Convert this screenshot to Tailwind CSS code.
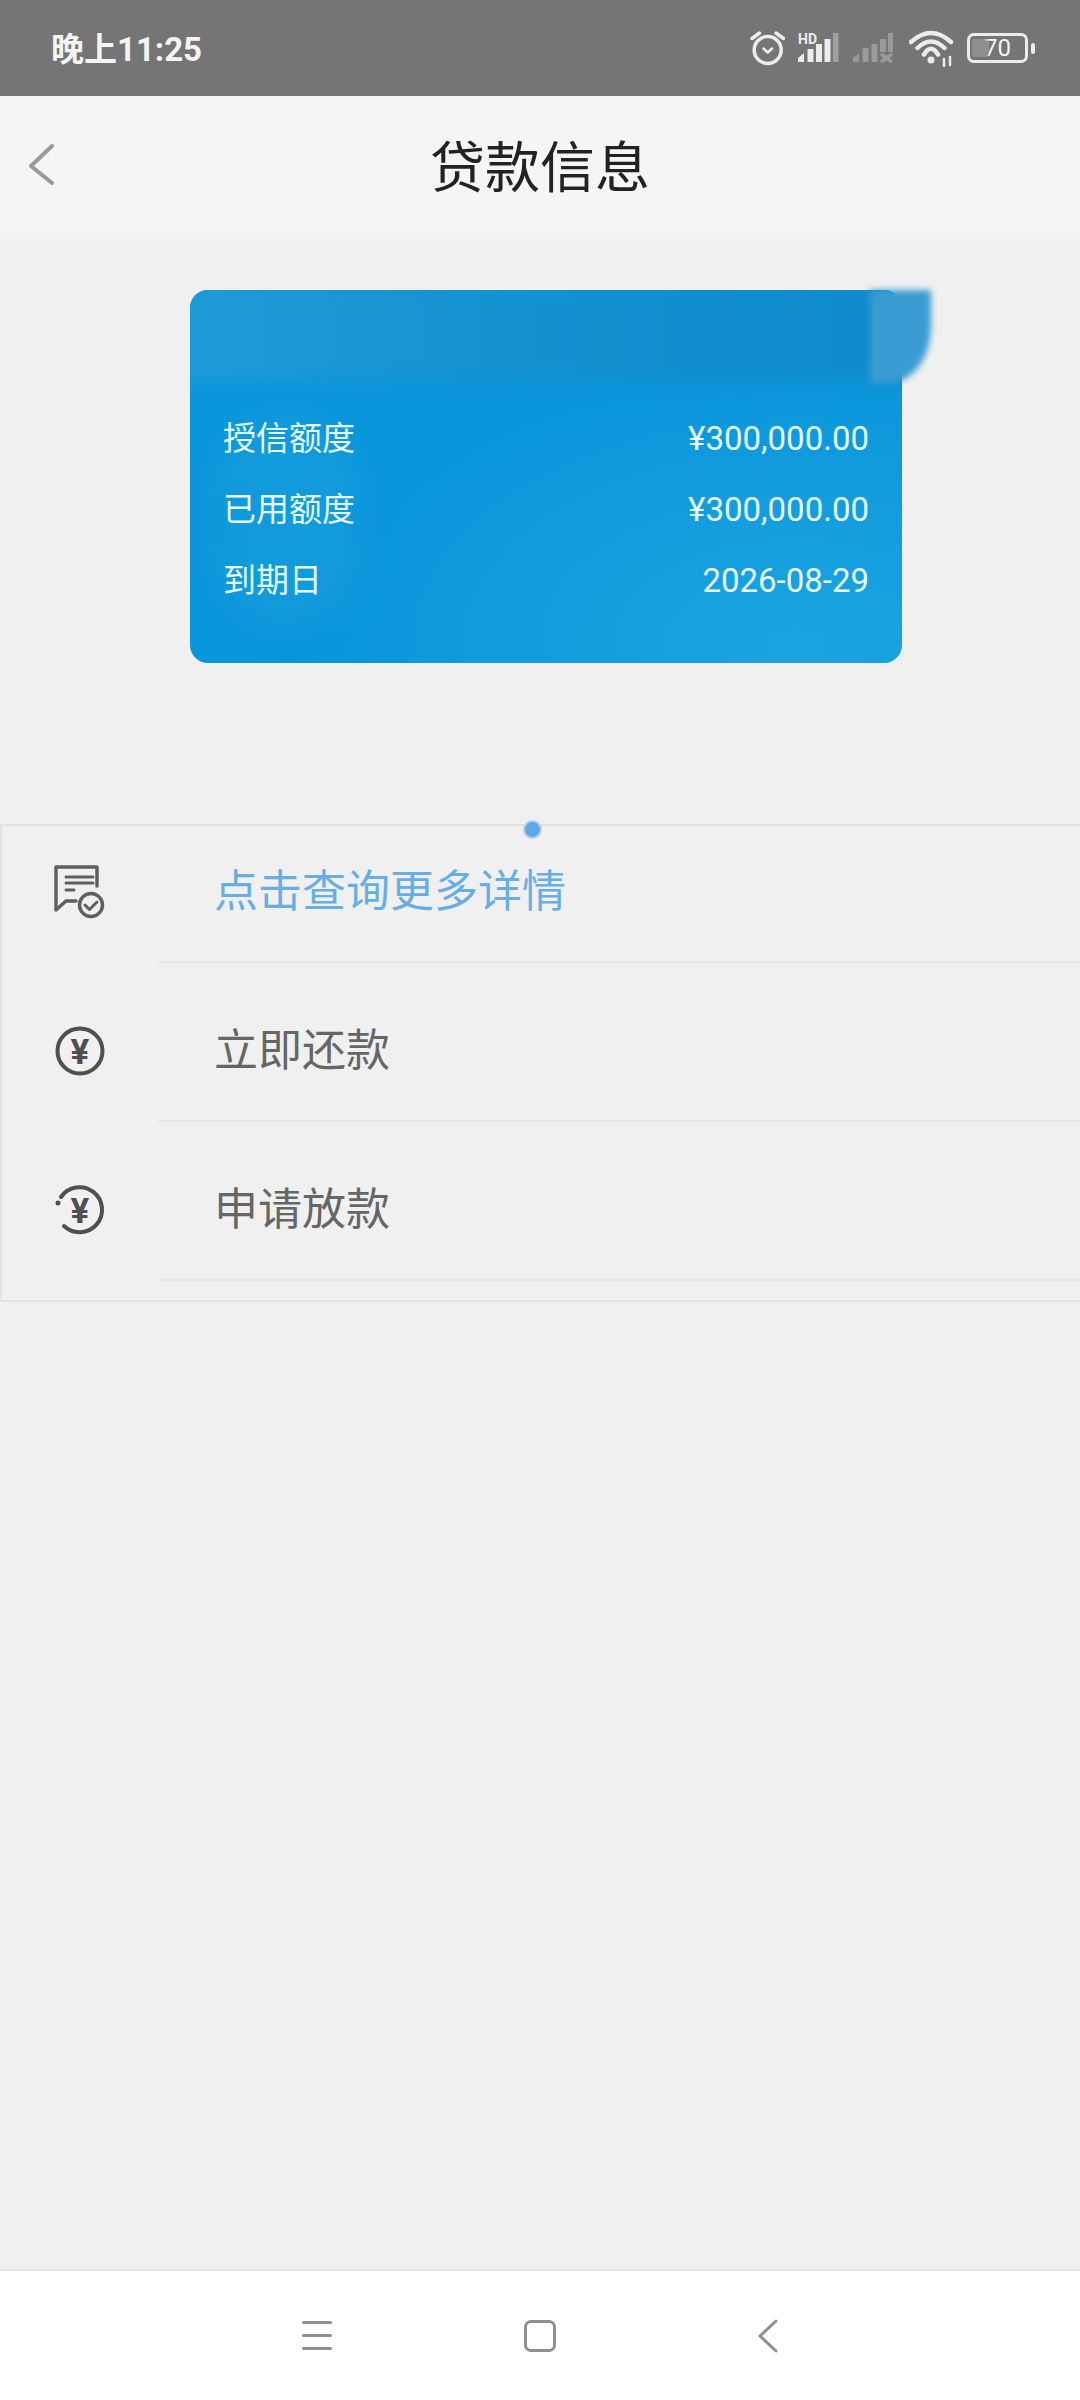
<!DOCTYPE html>
<html lang="zh-CN">
<head>
    <meta charset="UTF-8">
    <meta name="viewport" content="width=device-width, initial-scale=1.0">
    <title>贷款信息</title>
    <script src="https://cdn.jsdelivr.net/npm/@tailwindcss/browser@4"></script>
</head>
<body class="bg-[#f0f0f0] font-['Roboto','Noto_Sans_CJK_SC',sans-serif]">
    <div class="flex flex-col w-[1080px] h-[2400px] overflow-hidden">
        <!-- status bar -->
        <div class="flex items-center justify-between h-[96px] pl-[51px] pr-[45px] bg-[#757575] shrink-0">
            <span class="pt-[2px] text-[33px] font-bold text-[#f4f4f4] leading-none">晚上11:25</span>
            <div class="flex items-center h-[40px]">
                <svg width="35" height="36" viewBox="0 0 35 36" fill="none" stroke="#ececec" stroke-width="3.500" stroke-linecap="round" stroke-linejoin="round">
                    <circle cx="17.7" cy="20" r="13.500"/>
                    <path d="M2 8.500L9.500 3M26 3L33.500 8.500"/>
                    <path d="M13.500 18.500L17.700 22.500L22 18.500" stroke-width="2.500"/>
                </svg>
                <svg class="ml-[13px] overflow-visible" width="41" height="30" viewBox="0 0 41 30">
                    <text x="0" y="11" font-family="Roboto" font-weight="700" font-size="14" fill="#ececec">HD</text>
                    <path d="M0 29V25L6 20V29Z" fill="#ececec"/>
                    <rect x="9.500" y="16" width="6" height="13" fill="#ececec"/>
                    <rect x="18" y="11" width="6" height="18" fill="#ececec"/>
                    <rect x="26.500" y="6" width="6" height="23" fill="#ececec"/>
                    <rect x="35" y="0" width="5.500" height="29" fill="#a0a0a0"/>
                </svg>
                <svg class="ml-[14px]" width="40" height="30" viewBox="0 0 40 30" fill="#9a9a9a">
                    <path d="M0 29V25L6 20V29Z"/>
                    <rect x="9.500" y="15" width="6" height="14"/>
                    <rect x="18.500" y="11" width="6" height="18"/>
                    <rect x="27" y="6" width="6" height="13"/>
                    <rect x="35" y="0" width="5" height="19"/>
                    <path d="M28 21L39 29M39 21L28 29" stroke="#9a9a9a" stroke-width="3.500" fill="none"/>
                </svg>
                <svg class="ml-[16px]" width="46" height="38" viewBox="0 0 46 38" fill="none" stroke="#ececec" stroke-width="4.500" stroke-linecap="round">
                    <path d="M2 13Q22 -5 42 13M8.500 19Q22 6 35.500 19M15 25.500Q22 14 29 25.500"/>
                    <circle cx="22" cy="31" r="3.500" fill="#ececec" stroke="none"/>
                    <path d="M35 30V37M41 28V36" stroke-width="2.500"/>
                </svg>
                <div class="relative ml-[12px] flex items-center w-[68px] h-[30px]">
                    <div class="flex items-center justify-center w-[61px] h-[30px] border-[3px] border-[#ececec] rounded-[7px]">
                        <span class="text-[24px] text-[#f4f4f4] leading-none">70</span>
                    </div>
                    <div class="absolute left-[5px] top-[6px] w-[17px] h-[18px] bg-[#a0a0a0]/60 rounded-[2px]"></div>
                    <div class="w-[4px] h-[11px] ml-[3px] bg-[#ececec] rounded-[2px]"></div>
                </div>
            </div>
        </div>

        <!-- header -->
        <div class="relative flex items-center justify-center h-[136px] pt-[9px] bg-[#f5f5f7] shrink-0">
            <svg class="absolute left-[25px] top-[46px]" width="32" height="44" viewBox="0 0 32 44" fill="none" stroke="#999999" stroke-width="4" stroke-linecap="round" stroke-linejoin="round">
                <path d="M27 4L6 24L27 41"/>
            </svg>
            <h1 class="text-[55px] font-normal text-[#222222] leading-none">贷款信息</h1>
        </div>

        <!-- page -->
        <div class="flex-1 bg-gradient-to-b from-[#f3f3f4] to-[#f0f0f0] to-[1%]">
            <div class="relative mt-[58px] ml-[190px] w-[712px] h-[373px] pt-[119px] px-[33px] rounded-[18px] text-[33px] text-[#e6fbff] bg-[radial-gradient(ellipse_at_85%_95%,#1ca4e0_0%,#0a96dc_55%)]">
                <div class="absolute inset-0 overflow-hidden rounded-[18px]">
                    <div class="absolute left-[-10px] top-[-10px] w-[732px] h-[102px] blur-[9px] bg-gradient-to-r from-[#1f9bd7] via-[#1391cf] to-[#0e8aca]"></div>
                    <div class="absolute left-[22px] top-[120px] w-[150px] h-[220px] rounded-full bg-[#1c9fdd]/40 blur-[14px]"></div>
                </div>
                <div class="absolute left-[680px] top-0 w-[61px] h-[93px] rounded-br-[42px_56px] blur-[3px] bg-[#3a9cd2]"></div>
                <div class="relative flex items-center justify-between h-[60px] mb-[11px]">
                    <span>授信额度</span><span>¥300,000.00</span>
                </div>
                <div class="relative flex items-center justify-between h-[60px] mb-[11px]">
                    <span>已用额度</span><span>¥300,000.00</span>
                </div>
                <div class="relative flex items-center justify-between h-[60px]">
                    <span>到期日</span><span>2026-08-29</span>
                </div>
            </div>

            <!-- menu -->
            <div class="relative mt-[161px] pb-[19px] border-y-2 border-l-2 border-[#e2e4e4] text-[44px] text-[#666666]">
                <div class="absolute left-[521px] top-[-6px] w-[19px] h-[19px] rounded-full border-2 border-[#b9cfe4] bg-[#5fa6ea]"></div>
                <div class="flex h-[137px]">
                    <div class="w-[156px] pl-[48px] pt-[36px] shrink-0">
                        <svg width="60" height="60" viewBox="0 0 60 60" fill="none" stroke="#5f5f5f" stroke-width="3.500" stroke-linecap="round" stroke-linejoin="round">
                            <path d="M6 5H47V24M6 5V48L16 39H26"/>
                            <path d="M16 15H43M16 21H43M16 28H24" stroke-width="3"/>
                            <circle cx="41" cy="43" r="11.500" stroke-width="3.500"/>
                            <path d="M35 43L39.500 47.500L47 40" stroke-width="3"/>
                        </svg>
                    </div>
                    <div class="flex-1 flex items-start pt-[36px] pl-[56px] border-b-2 border-[#e6e6e6]">
                        <span class="leading-[60px] text-[#69aee3]">点击查询更多详情</span>
                    </div>
                </div>
                <div class="flex h-[159px]">
                    <div class="w-[156px] pl-[48px] pt-[58px] shrink-0">
                        <svg width="60" height="60" viewBox="0 0 60 60" fill="none" stroke="#4f4f4f" stroke-width="4">
                            <circle cx="30" cy="30" r="22.500"/>
                            <text x="30" y="43" text-anchor="middle" font-family="Roboto" font-weight="700" font-size="35" fill="#4f4f4f" stroke="none">¥</text>
                        </svg>
                    </div>
                    <div class="flex-1 flex items-start pt-[58px] pl-[56px] border-b-2 border-[#e6e6e6]">
                        <span class="leading-[60px]">立即还款</span>
                    </div>
                </div>
                <div class="flex h-[159px]">
                    <div class="w-[156px] pl-[48px] pt-[58px] shrink-0">
                        <svg width="60" height="60" viewBox="0 0 60 60" fill="none" stroke="#4f4f4f" stroke-width="4" stroke-linecap="round">
                            <path d="M11 17A22.500 22.500 0 1 1 14 46"/>
                            <circle cx="8" cy="23" r="2.500" fill="#4f4f4f" stroke="none"/>
                            <text x="30" y="43" text-anchor="middle" font-family="Roboto" font-weight="700" font-size="35" fill="#4f4f4f" stroke="none">¥</text>
                        </svg>
                    </div>
                    <div class="flex-1 flex items-start pt-[58px] pl-[56px] border-b-2 border-[#e6e6e6]">
                        <span class="leading-[60px]">申请放款</span>
                    </div>
                </div>
            </div>
        </div>

        <!-- navigation bar -->
        <div class="flex items-center h-[131px] pl-[302px] bg-white border-t-2 border-[#e4e4e4] shrink-0">
            <div class="flex flex-col gap-[10px] w-[30px]">
                <div class="h-[3px] bg-[#8f8f8f] rounded-full"></div>
                <div class="h-[3px] bg-[#8f8f8f] rounded-full"></div>
                <div class="h-[3px] bg-[#8f8f8f] rounded-full"></div>
            </div>
            <div class="w-[32px] h-[32px] ml-[192px] border-[3px] border-[#8f8f8f] rounded-[7px]"></div>
            <svg class="ml-[202px]" width="20" height="34" viewBox="0 0 20 34" fill="none" stroke="#8f8f8f" stroke-width="3" stroke-linecap="round" stroke-linejoin="round">
                <path d="M18 2L2 17L18 32"/>
            </svg>
        </div>
    </div>
</body>
</html>
